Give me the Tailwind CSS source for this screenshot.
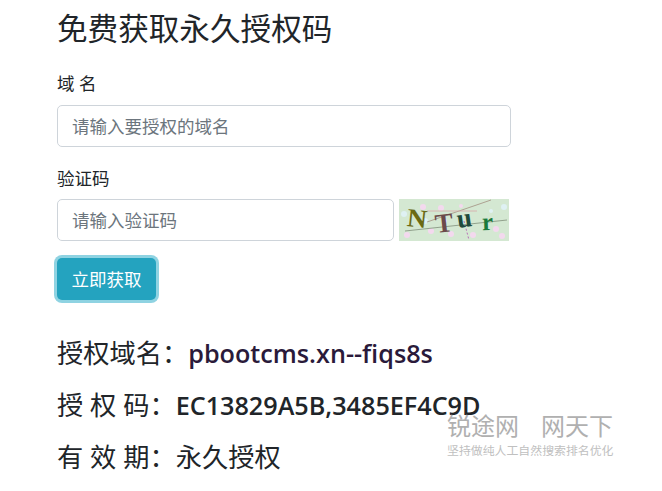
<!DOCTYPE html>
<html lang="zh-CN">
<head>
<meta charset="utf-8">
<script src="https://cdn.jsdelivr.net/npm/@tailwindcss/browser@4"></script>
</head>
<body class="bg-white overflow-hidden">
<div class="relative w-[662px] h-[491px] overflow-hidden pl-[57px] text-[#212529] font-['Open_Sans','Noto_Sans_CJK_SC',sans-serif]">
  <h2 class="text-[30.6px] leading-[36px] pt-[10px] font-normal">免费获取永久授权码</h2>
  <form class="w-[454px] mt-[25px]">
    <label class="block text-[17.5px] leading-[24px]">域 名</label>
    <input class="block mt-[10px] w-full h-[42px] px-[14px] border border-[#ced4da] rounded-[5px] text-[17.5px] placeholder:text-[#6c757d] outline-none" placeholder="请输入要授权的域名">
    <label class="block mt-[19px] text-[17.5px] leading-[24px]">验证码</label>
    <div class="flex items-center mt-[9px] gap-[5px]">
      <input class="block w-[337px] h-[42px] px-[14px] border border-[#ced4da] rounded-[5px] text-[17.5px] placeholder:text-[#6c757d] outline-none" placeholder="请输入验证码">
      <svg class="block w-[110px] h-[42px] shrink-0" viewBox="0 0 110 42">
        <rect width="110" height="42" fill="#d4e8d2"/>
        <g fill="#f3d9ee"><circle cx="24" cy="8" r="3"/><circle cx="42" cy="9" r="3"/><circle cx="62" cy="7" r="2"/><circle cx="32" cy="32" r="3"/><circle cx="52" cy="35" r="3"/><circle cx="74" cy="36" r="3"/><circle cx="97" cy="30" r="3"/><circle cx="8" cy="36" r="3"/><circle cx="103" cy="37" r="3"/><circle cx="46" cy="22" r="2"/></g>
        <g fill="#dff1f3"><circle cx="26" cy="22" r="3"/><circle cx="105" cy="8" r="3"/><circle cx="92" cy="12" r="2"/><circle cx="5" cy="15" r="3"/></g>
        <path d="M28 23 L92 1" stroke="#a89a8a" stroke-width="0.9" fill="none"/>
        <path d="M28 12 H78" stroke="#d8a8a8" stroke-width="0.8" fill="none"/>
        <path d="M6 32 L108 21" stroke="#8a9a84" stroke-width="0.9" fill="none"/>
        <path d="M65 22 L70 41" stroke="#b050b0" stroke-width="0.8" stroke-dasharray="2 2" fill="none"/>
        <text x="8" y="28" font-family="Liberation Serif" font-weight="700" font-size="26" fill="#6b6a14" textLength="20" lengthAdjust="spacingAndGlyphs" transform="rotate(6 18 20)">N</text>
        <text x="36" y="33" font-family="Liberation Serif" font-weight="700" font-size="27" fill="#6b4a4a" transform="rotate(-6 46 24)">T</text>
        <text x="58" y="28" font-family="Liberation Serif" font-weight="700" font-size="27" fill="#1f4a3a" transform="rotate(-8 66 22)">u</text>
        <text x="83" y="31" font-family="Liberation Serif" font-weight="700" font-size="25" fill="#1a7a3a" transform="rotate(-2 90 24)">r</text>
      </svg>
    </div>
    <button type="button" class="block mt-[17px] h-[42px] w-[99px] bg-[#24a3bf] text-white text-[17.5px] leading-[42px] rounded-[5px] shadow-[0_0_0_3px_#8fd3e2]">立即获取</button>
  </form>
  <div class="mt-[27px] text-[26.25px] leading-[52px]">
    <p>授权域名&#xFF1A;<span class="text-[25.2px] font-semibold text-[#2a1a3a]">pbootcms.xn--fiqs8s</span></p>
    <p>授 权 码&#xFF1A;<span class="text-[25.2px] font-semibold text-[#212529]">EC13829A5B,3485EF4C9D</span></p>
    <p>有 效 期&#xFF1A;永久授权</p>
  </div>
  <div class="absolute left-[447px] top-[411px] w-[170px]">
    <div class="flex gap-[22px] text-[24px] leading-[30px] text-[#b0b0b0]"><span>锐途网</span><span>网天下</span></div>
    <div class="text-[11.9px] leading-[16px] mt-[1px] text-[#c0c0c0] whitespace-nowrap">坚持做纯人工自然搜索排名优化</div>
  </div>
</div>
</body>
</html>
